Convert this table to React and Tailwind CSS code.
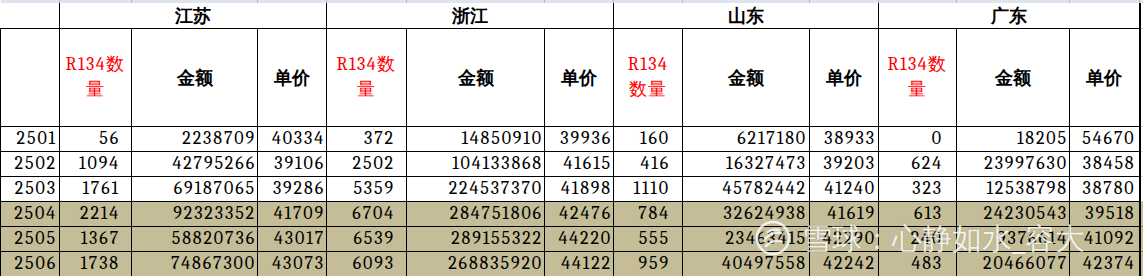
import React from "react";

const rows = [
  ["2501", "56", "2238709", "40334", "372", "14850910", "39936", "160", "6217180", "38933", "0", "18205", "54670"],
  ["2502", "1094", "42795266", "39106", "2502", "104133868", "41615", "416", "16327473", "39203", "624", "23997630", "38458"],
  ["2503", "1761", "69187065", "39286", "5359", "224537370", "41898", "1110", "45782442", "41240", "323", "12538798", "38780"],
  ["2504", "2214", "92323352", "41709", "6704", "284751806", "42476", "784", "32624938", "41619", "613", "24230543", "39518"],
  ["2505", "1367", "58820736", "43017", "6539", "289155322", "44220", "555", "23463415", "42290", "240", "9376614", "41092"],
  ["2506", "1738", "74867300", "43073", "6093", "268835920", "44122", "959", "40497558", "42242", "483", "20466077", "42374"],
];

// full class per data column (qty columns sit further in)
const cellCls = [
  "p-0 pr-[2px] pb-[1px] border border-black text-right align-bottom leading-[22px] whitespace-nowrap font-serif text-[18px] tracking-[1.9px]",
  "p-0 pr-[11px] pb-[1px] border border-black text-right align-bottom leading-[22px] whitespace-nowrap font-serif text-[18px] tracking-[1.9px]",
  "p-0 pr-[1px] pb-[1px] border border-black text-right align-bottom leading-[22px] whitespace-nowrap font-serif text-[18px] tracking-[1.9px]",
  "p-0 pr-[1px] pb-[1px] border border-black text-right align-bottom leading-[22px] whitespace-nowrap font-serif text-[18px] tracking-[1.9px]",
  "p-0 pr-[11px] pb-[1px] border border-black text-right align-bottom leading-[22px] whitespace-nowrap font-serif text-[18px] tracking-[1.9px]",
  "p-0 pr-[1px] pb-[1px] border border-black text-right align-bottom leading-[22px] whitespace-nowrap font-serif text-[18px] tracking-[1.9px]",
  "p-0 pr-[1px] pb-[1px] border border-black text-right align-bottom leading-[22px] whitespace-nowrap font-serif text-[18px] tracking-[1.9px]",
  "p-0 pr-[12px] pb-[1px] border border-black text-right align-bottom leading-[22px] whitespace-nowrap font-serif text-[18px] tracking-[1.9px]",
  "p-0 pr-[2px] pb-[1px] border border-black text-right align-bottom leading-[22px] whitespace-nowrap font-serif text-[18px] tracking-[1.9px]",
  "p-0 pr-[2px] pb-[1px] border border-black text-right align-bottom leading-[22px] whitespace-nowrap font-serif text-[18px] tracking-[1.9px]",
  "p-0 pr-[13px] pb-[1px] border border-black text-right align-bottom leading-[22px] whitespace-nowrap font-serif text-[18px] tracking-[1.9px]",
  "p-0 pr-[1px] pb-[1px] border border-black text-right align-bottom leading-[22px] whitespace-nowrap font-serif text-[18px] tracking-[1.9px]",
  "p-0 pr-[3px] pb-[1px] border border-black text-right align-bottom leading-[22px] whitespace-nowrap font-serif text-[18px] tracking-[1.9px]",
];

const regions = ["江苏", "浙江", "山东", "广东"];

function Watermark() {
  return (
    <div className="absolute left-[755px] top-[220px] flex items-center gap-[11px] pointer-events-none opacity-80">
      <svg width="36" height="36" viewBox="0 0 36 36" fill="none">
        <circle cx="18" cy="18" r="16" stroke="white" strokeWidth="2.5" />
        <path d="M9 21c3-6 9-9 17-8" stroke="white" strokeWidth="2.5" strokeLinecap="round" />
        <path d="M11 26c4-4 9-6 15-5" stroke="white" strokeWidth="2.5" strokeLinecap="round" />
        <path d="M13 12c3-2 7-3 11-2" stroke="white" strokeWidth="2.5" strokeLinecap="round" />
      </svg>
      <span className="text-[30px] leading-none text-white [text-shadow:0_0_1px_rgba(0,0,0,0.35)]">
        雪球：心静如水_容大
      </span>
    </div>
  );
}

export default function App() {
  return (
    <div className="relative w-[1143px] h-[276px] overflow-hidden bg-white text-black">
      <table className="table-fixed border-collapse w-[1143px] text-[17px]">
        <colgroup>
          <col className="w-[59px]" />
          <col className="w-[72px]" />
          <col className="w-[126px]" />
          <col className="w-[69px]" />
          <col className="w-[80px]" />
          <col className="w-[138px]" />
          <col className="w-[69px]" />
          <col className="w-[69px]" />
          <col className="w-[127px]" />
          <col className="w-[69px]" />
          <col className="w-[78px]" />
          <col className="w-[113px]" />
          <col className="w-[70px]" />
          <col className="w-[4px]" />
        </colgroup>
        <tbody>
          {/* excel column strip */}
          <tr className="h-[3px]">
            {Array.from({ length: 14 }).map((_, i) => (
              <td key={i} className="p-0 h-[3px] bg-[#dfe5ee] border-r border-r-[#a9bbd0]" />
            ))}
          </tr>

          {/* region row */}
          <tr className="h-[25px]">
            <td className="p-0 border-r border-r-black border-b border-b-black" />
            {regions.map((r) => (
              <td
                key={r}
                colSpan={3}
                className="p-0 text-center align-middle border-x border-x-black border-b border-b-black leading-none font-bold text-[18px]"
              >
                {r}
              </td>
            ))}
            <td className="p-0 border-l-2 border-l-black border-b border-b-[#d0d7e5]" />
          </tr>

          {/* column header row */}
          <tr className="h-[98px]">
            <td className="p-0 border border-black" />
            {regions.map((r, i) => (
              <React.Fragment key={r}>
                <td className="p-0 border border-black text-center align-middle text-[#ff0000] font-serif text-[18px] tracking-[1.5px] leading-[25px]">
                  {i === 2 ? (
                    <>
                      R134
                      <br />
                      数量
                    </>
                  ) : (
                    <>
                      R134数
                      <br />量
                    </>
                  )}
                </td>
                <td className="p-0 border border-black text-center align-middle font-bold text-[18px]">金额</td>
                <td className="p-0 border border-black text-center align-middle font-bold text-[18px]">单价</td>
              </React.Fragment>
            ))}
            <td className="p-0 border-l-2 border-l-black border-b border-b-[#d0d7e5]" />
          </tr>

          {rows.map((row, ri) => {
            const tan = ri >= 3;
            return (
              <tr key={row[0]} className={tan ? "h-[25px] bg-[#c4bd97]" : "h-[25px] bg-white"}>
                {row.map((v, ci) => (
                  <td key={ci} className={cellCls[ci]}>
                    {v}
                  </td>
                ))}
                <td className={tan ? "p-0 border-l-2 border-l-black border-b border-b-[#8f8a6c]" : "p-0 border-l-2 border-l-black border-b border-b-[#d0d7e5]"} />
              </tr>
            );
          })}
        </tbody>
      </table>
      <Watermark />
    </div>
  );
}
